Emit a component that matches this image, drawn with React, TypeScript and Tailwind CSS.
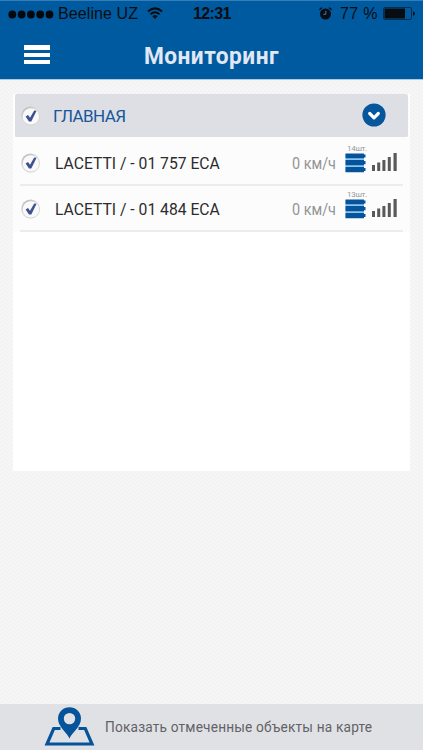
import React from "react";

function Check() {
  return (
    <svg className="h-5 w-5 shrink-0" viewBox="0 0 20 20">
      <defs>
        <linearGradient id="rim" x1="0" y1="0" x2="0.7" y2="1">
          <stop offset="0" stopColor="#b0b0b2" />
          <stop offset="0.5" stopColor="#dcdcdc" />
          <stop offset="1" stopColor="#cfcfd1" />
        </linearGradient>
      </defs>
      <circle cx="9.6" cy="10" r="9.4" fill="url(#rim)" />
      <circle cx="9.9" cy="10.4" r="8.2" fill="#f9f9f9" />
      <path d="M4.6 10.4 7 8.9 9 11.7 13.2 4.4 15.6 4.7 10.3 15.6 8 15.6Z" fill="#3f5290" />
    </svg>
  );
}

function Sensors() {
  return (
    <svg className="block h-[20px] w-[21px]" viewBox="0 0 21 20">
      <path d="M0.5 1H19V19H0.5Z" fill="#8cc5f0" />
      <path d="M0.5 0.5H19V1.5H20.5V4.5H19V5.3H0.5Z M0.5 7H19V8H20.5V11.3H19V12.2H0.5Z M0.5 14H19V15H20.5V18H19V19.2H0.5Z" fill="#05549b" />
    </svg>
  );
}

function Signal() {
  return (
    <svg className="mt-[12px] ml-[6px] block h-[20px] w-[25px]" viewBox="0 0 25 20">
      <path d="M0 13h3v6H0z M5.2 10.5h3V19h-3z M10.4 8h3v11h-3z M15.8 5h3v14h-3z M21.5 1h3.2v18h-3.2z" fill="#59595b" />
    </svg>
  );
}

function Row({ name, count }: { name: string; count: string }) {
  return (
    <div className="mx-[7px] flex h-[46px] items-start border-b-2 border-[#ececec]">
      <div className="mt-[13px] ml-px h-5">
        <Check />
      </div>
      <div className="mt-[14px] ml-[14px] w-[237px] origin-left scale-x-[0.98] text-[16px] leading-5 whitespace-nowrap text-[#2c2c2c]">{name}</div>
      <div className="mt-[14px] w-[47px] origin-left scale-x-[0.9] text-[16px] leading-5 whitespace-nowrap text-[#949494]">0 км/ч</div>
      <div className="ml-[6px] w-[21px]">
        <div className="mt-[5px] h-[8px] pl-[2px] text-[8px] leading-[8px] tracking-[-0.3px] whitespace-nowrap text-[#999]">{count}</div>
        <Sensors />
      </div>
      <Signal />
    </div>
  );
}

function StatusBar() {
  return (
    <div className="flex h-7 items-center border-t border-[#347db8] pl-[8px] font-['Liberation_Sans',sans-serif] text-[16px] text-[#080d12]">
      <svg className="mb-px h-[9px] w-[46px]" viewBox="0 0 46 9">
        {[4.3, 13.6, 22.9, 32.2, 41.5].map((x) => (
          <circle key={x} cx={x} cy="4.5" r="3.9" fill="#05080c" />
        ))}
      </svg>
      <div className="mb-px ml-[4px] w-[89px] tracking-[0.1px] whitespace-nowrap">Beeline UZ</div>
      <svg className="mb-[2px] h-[13px] w-[16px]" viewBox="0 0 16 13" fill="none" stroke="#080d12" strokeWidth="2">
        <path d="M1 4.5Q8-1.8 15 4.5M3.5 7.3Q8 3.3 12.5 7.3" />
        <path d="M5.3 9.2Q8 6.9 10.7 9.2L8 12Z" fill="#080d12" stroke="none" />
      </svg>
      <div className="mb-px ml-[30px] w-[126px] text-[16px] font-bold tracking-[-0.6px]">12:31</div>
      <svg className="mb-[2px] h-[13px] w-[13px]" viewBox="0 0 13 13">
        <circle cx="6.5" cy="7" r="5.5" fill="#080d12" />
        <path d="M0.6 3.2Q1 1 3.2 0.8M9.8 0.8Q12 1 12.4 3.2" stroke="#080d12" strokeWidth="1.2" fill="none" />
        <path d="M6.8 3.8V7.3H4.3" stroke="#3b7cb2" strokeWidth="1" fill="none" />
      </svg>
      <div className="mb-px ml-[8px] w-[43px] tracking-[0.3px] whitespace-nowrap">77 %</div>
      <svg className="mb-[2px] h-[13px] w-[33px]" viewBox="0 0 33 13">
        <rect x="0.5" y="0.5" width="28" height="12" rx="1.5" fill="none" stroke="#0b2b4a" />
        <rect x="1.5" y="1.5" width="20.5" height="10" fill="#080d12" />
        <path d="M30 4.2Q32 5 32 6.5T30 8.8Z" fill="#080d12" />
      </svg>
    </div>
  );
}

export default function App() {
  return (
    <div className="flex h-[750px] w-[423px] flex-col overflow-hidden bg-[#f5f5f5] bg-[repeating-linear-gradient(45deg,#f2f2f2_0_1px,#f7f7f7_1px_2.828px)] font-[Roboto,'Noto_Sans',sans-serif]">
      <header className="h-[80px] shrink-0 border-b border-[#a9cbe5] bg-[#005a9f]">
        <StatusBar />
        <div className="relative flex h-[51px] items-center justify-center">
          <div className="absolute top-[17px] left-[24px] flex flex-col gap-[3px]">
            <div className="h-[5px] w-[26px] bg-white" />
            <div className="h-[4px] w-[26px] bg-white" />
            <div className="h-[4px] w-[26px] bg-white" />
          </div>
          <h1 className="scale-x-[0.945] pt-[5px] text-[24px] leading-7 font-bold tracking-[0.5px] text-[#e1e8f3]">Мониторинг</h1>
        </div>
      </header>
      <main className="mt-[14px] mr-[13px] ml-[13px] h-[377px] bg-white">
        <div className="mr-[2px] ml-[2px] flex h-[43px] items-center rounded-[2px] bg-[#dedfe4] pl-[6px] shadow-[0_1px_1px_#e8e8ea]">
          <Check />
          <div className="mt-[2px] ml-[12px] flex-1 text-[17px] tracking-[-0.6px] text-[#17579b]">ГЛАВНАЯ</div>
          <svg className="mr-[22px] mb-[2px] h-6 w-6" viewBox="0 0 24 24">
            <circle cx="12" cy="12" r="11.6" fill="#05569c" />
            <path d="M7.7 10.5 12 14.8 16.3 10.5" fill="none" stroke="#fff" strokeWidth="3.2" strokeLinecap="round" strokeLinejoin="round" />
          </svg>
        </div>
        <div className="bg-[#fcfcfc] pt-[3px]">
          <Row name="LACETTI / - 01 757 ECA" count="14шт." />
          <Row name="LACETTI / - 01 484 ECA" count="13шт." />
        </div>
      </main>
      <footer className="mt-auto flex h-[46px] items-start bg-[#e0e1e5]">
        <svg className="mt-[3px] ml-[44px] h-[40px] w-[51px]" viewBox="0 0 51 40">
          <path d="M16.5 21.5H9.7L3 37H48L41.3 21.5H34.5" fill="none" stroke="#05549b" strokeWidth="3.2" />
          <path fillRule="evenodd" d="M25.5 31.5C22.5 25 14 20 14 11.5A11.5 11.3 0 0 1 37 11.5C37 20 28.5 25 25.5 31.5ZM25.5 5.9A5.7 5.7 0 1 0 25.5 17.3A5.7 5.7 0 1 0 25.5 5.9Z" fill="#05549b" />
        </svg>
        <div className="mt-[13px] ml-[10px] origin-left scale-x-[0.912] text-[15px] leading-5 tracking-[0.2px] whitespace-nowrap text-[#626266]">Показать отмеченные объекты на карте</div>
      </footer>
    </div>
  );
}
